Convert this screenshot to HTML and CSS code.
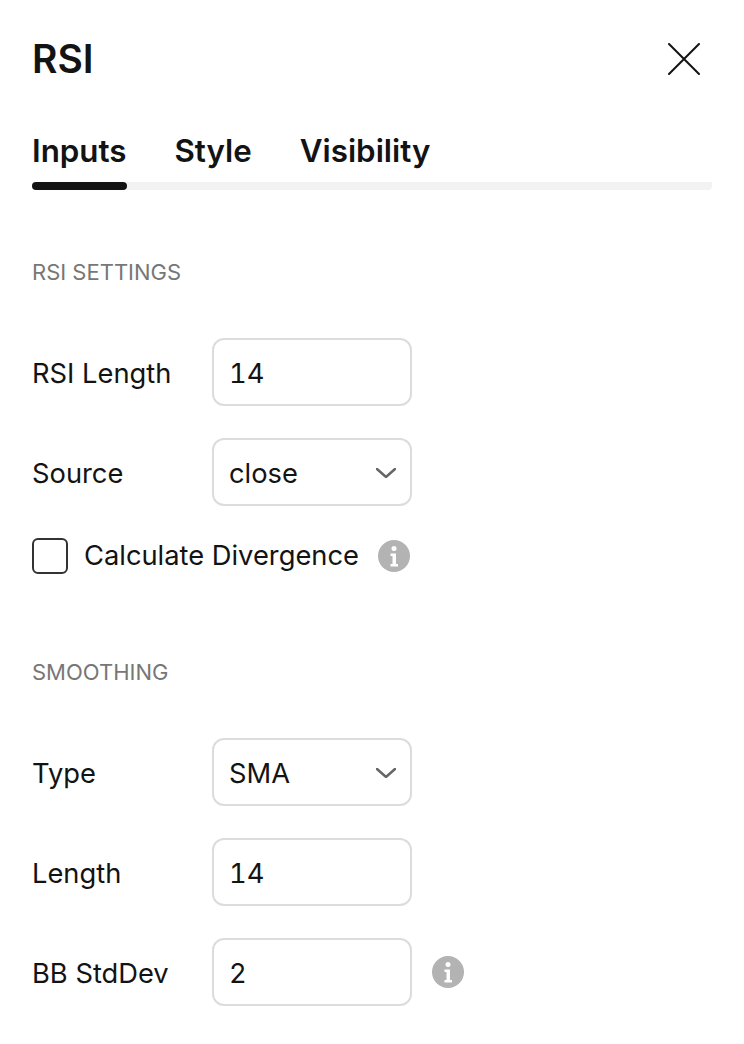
FILE: index.html
```html
<!DOCTYPE html>
<html lang="en">
<head>
  <meta charset="UTF-8">
  <meta name="viewport" content="width=device-width, initial-scale=1.0">
  <title>RSI</title>
  <link rel="stylesheet" href="styles.css">
</head>
<body>
  <div class="header">
    <h1>RSI</h1>
    <button class="close-btn" aria-label="Close">
      <svg width="32" height="32" viewBox="0 0 32 32"><path d="M1 1L31 31M31 1L1 31" /></svg>
    </button>
  </div>

  <div class="tabs">
    <span class="tab active">Inputs</span>
    <span class="tab">Style</span>
    <span class="tab">Visibility</span>
  </div>

  <section class="section">
    <h2>RSI SETTINGS</h2>
    <div class="form-row">
      <label>RSI Length</label>
      <div class="field">14</div>
    </div>
    <div class="form-row">
      <label>Source</label>
      <div class="field select">close
        <svg class="chevron" width="20" height="10" viewBox="0 0 20 10"><path d="M1 1L10 9L19 1" /></svg>
      </div>
    </div>
    <div class="check-row">
      <span class="checkbox"></span>
      <span class="check-label">Calculate Divergence</span>
      <svg class="info" width="32" height="32" viewBox="0 0 32 32"><circle cx="16" cy="16" r="16" /><circle class="info-mark" cx="16" cy="8.500" r="2.500" /><path class="info-mark" d="M12.500 13.500H18V24H20V26.500H12.500V24H14.500V16H12.500z" /></svg>
    </div>
  </section>

  <section class="section">
    <h2>SMOOTHING</h2>
    <div class="form-row">
      <label>Type</label>
      <div class="field select">SMA
        <svg class="chevron" width="20" height="10" viewBox="0 0 20 10"><path d="M1 1L10 9L19 1" /></svg>
      </div>
    </div>
    <div class="form-row">
      <label>Length</label>
      <div class="field">14</div>
    </div>
    <div class="form-row">
      <label>BB StdDev</label>
      <div class="field">2</div>
      <svg class="info" width="32" height="32" viewBox="0 0 32 32"><circle cx="16" cy="16" r="16" /><circle class="info-mark" cx="16" cy="8.500" r="2.500" /><path class="info-mark" d="M12.500 13.500H18V24H20V26.500H12.500V24H14.500V16H12.500z" /></svg>
    </div>
  </section>
</body>
</html>
```

FILE: styles.css
```css
body {
  font-family: Inter, 'Noto Sans', sans-serif;
  margin: 0;
  padding: 0 32px;
  background-color: white;
  color: #131313;
}
.header {
  display: flex;
  justify-content: space-between;
  align-items: center;
  height: 118px;
}
h1 {
  margin: 0 0 2px;
  font-size: 39px;
  font-weight: 600;
}
.close-btn {
  display: flex;
  padding: 0;
  border: none;
  background: none;
  margin-right: 12px;
}
.close-btn path {
  stroke: #131313;
  stroke-width: 2;
  stroke-linecap: round;
  fill: none;
}
.tabs {
  display: flex;
  gap: 48px;
  height: 72px;
  box-sizing: border-box;
  border-bottom: 8px solid #f2f2f2;
  border-radius: 0 0 4px 4px;
}
.tab {
  position: relative;
  font-size: 31.300px;
  font-weight: 600;
  line-height: 66px;
}
.tab.active::after {
  content: "";
  position: absolute;
  left: 0;
  right: 0;
  bottom: -8px;
  height: 8px;
  border-radius: 4px;
  background-color: #131313;
}
.section {
  padding-top: 64px;
}
.section + .section {
  padding-top: 80px;
}
h2 {
  margin: 0 0 48px;
  font-size: 22px;
  font-weight: 400;
  line-height: 36px;
  color: #777;
}
.form-row {
  display: flex;
  align-items: center;
  margin-bottom: 32px;
  font-size: 27.300px;
}
label {
  width: 180px;
  padding-top: 2px;
}
.field {
  position: relative;
  display: flex;
  align-items: center;
  justify-content: space-between;
  width: 200px;
  height: 68px;
  box-sizing: border-box;
  padding: 2px 14px 0 15px;
  border: 2px solid #dcdcdc;
  border-radius: 12px;
  font-feature-settings: "tnum";
}
.chevron path {
  stroke: #666;
  stroke-width: 2.500;
  stroke-linecap: round;
  fill: none;
}
.check-row {
  display: flex;
  align-items: center;
  font-size: 27.300px;
  height: 36px;
}
.checkbox {
  width: 36px;
  height: 36px;
  box-sizing: border-box;
  border: 2px solid #333;
  border-radius: 6px;
  margin-right: 16px;
}
.check-label {
  margin-right: 19px;
  padding-bottom: 2px;
}
.info {
  flex: none;
  fill: #b3b3b3;
}
.form-row .info {
  margin-left: 20px;
}
.info-mark {
  fill: white;
}
```
